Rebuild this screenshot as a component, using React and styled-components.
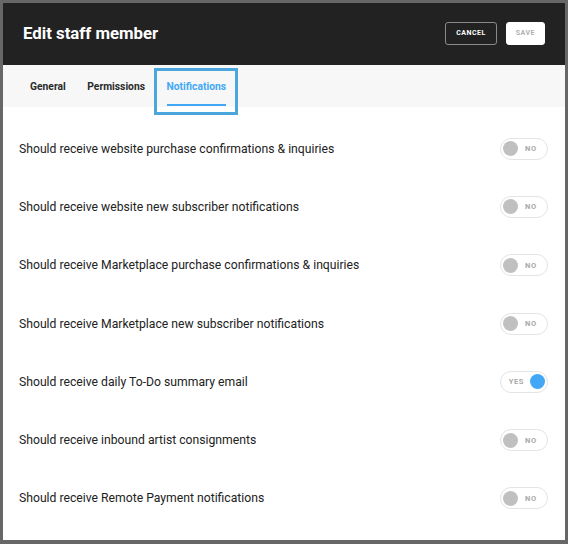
import React from 'react';
import styled, { createGlobalStyle } from 'styled-components';

const GlobalStyle = createGlobalStyle`
  html, body {
    margin: 0;
    padding: 0;
    background: #676767;
    font-family: Roboto, "Liberation Sans", sans-serif;
  }
`;

const settings = [
  { label: 'Should receive website purchase confirmations & inquiries', on: false },
  { label: 'Should receive website new subscriber notifications', on: false },
  { label: 'Should receive Marketplace purchase confirmations & inquiries', on: false },
  { label: 'Should receive Marketplace new subscriber notifications', on: false },
  { label: 'Should receive daily To-Do summary email', on: true },
  { label: 'Should receive inbound artist consignments', on: false },
  { label: 'Should receive Remote Payment notifications', on: false },
];

const Toggle = ({ on }) => (
  <Switch $on={on}>
    <Knob $on={on} />
    <SwitchLabel>{on ? 'YES' : 'NO'}</SwitchLabel>
  </Switch>
);

const App = () => {
  return (
    <>
      <GlobalStyle />
      <Page>
        <Modal>
          <Header>
            <Title>Edit staff member</Title>
            <Actions>
              <Button>Cancel</Button>
              <Button $primary>Save</Button>
            </Actions>
          </Header>
          <Tabs>
            <Tab>General</Tab>
            <Tab>Permissions</Tab>
            <Tab $active>Notifications</Tab>
          </Tabs>
          <List>
            {settings.map((s) => (
              <Row key={s.label}>
                <RowLabel>{s.label}</RowLabel>
                <Toggle on={s.on} />
              </Row>
            ))}
          </List>
        </Modal>
      </Page>
    </>
  );
};

const Page = styled.div`
  width: 568px;
  height: 544px;
  padding: 3px 3px 4px 3px;
  box-sizing: border-box;
`;

const Modal = styled.div`
  width: 562px;
  height: 537px;
  background: #fff;
  display: flex;
  flex-direction: column;
  overflow: hidden;
`;

const Header = styled.div`
  height: 62px;
  flex-shrink: 0;
  background: #222222;
  display: flex;
  align-items: center;
  justify-content: space-between;
  padding: 0 20px 2px 20px;
  box-sizing: border-box;
`;

const Title = styled.h1`
  margin: 0;
  color: #fff;
  font-size: 16.8px;
  font-weight: 700;
`;

const Actions = styled.div`
  display: flex;
  gap: 9px;
`;

const Button = styled.button`
  height: 23px;
  padding: 0 ${(p) => (p.$primary ? '9px' : '10px')};
  border-radius: 3px;
  border: 1px solid ${(p) => (p.$primary ? '#fff' : '#8a8a8a')};
  background: ${(p) => (p.$primary ? '#fff' : 'transparent')};
  color: ${(p) => (p.$primary ? '#b0b0b0' : '#fff')};
  font-family: Roboto, "Liberation Sans", sans-serif;
  font-size: 7px;
  font-weight: 700;
  letter-spacing: 0.5px;
  text-transform: uppercase;
`;

const Tabs = styled.div`
  height: 42px;
  flex-shrink: 0;
  background: #f7f7f7;
  display: flex;
  align-items: stretch;
  padding-left: 27px;
  gap: 21.5px;
`;

const Tab = styled.div`
  position: relative;
  display: flex;
  align-items: center;
  font-size: 10.3px;
  font-weight: 700;
  color: ${(p) => (p.$active ? '#42a8f5' : '#2a2a2a')};

  ${(p) =>
    p.$active &&
    `
    &::before {
      content: '';
      position: absolute;
      left: 0;
      right: 0;
      bottom: 1px;
      height: 2px;
      background: #42a8f5;
    }
    &::after {
      content: '';
      position: absolute;
      left: -13px;
      right: -12px;
      top: 3px;
      bottom: -8px;
      border: 3px solid #4aa6dc;
    }
  `}
`;

const List = styled.div`
  display: flex;
  flex-direction: column;
  padding-top: 20px;
`;

const Row = styled.div`
  height: 58.3px;
  display: flex;
  align-items: center;
  justify-content: space-between;
  padding: 0 17px 15px 16px;
  box-sizing: border-box;
`;

const RowLabel = styled.span`
  font-size: 12.2px;
  color: #222;
`;

const Switch = styled.div`
  width: 48px;
  height: 22px;
  box-sizing: border-box;
  border: 1px solid #e4e4e4;
  border-radius: 11px;
  background: #fff;
  display: flex;
  align-items: center;
  flex-direction: ${(p) => (p.$on ? 'row-reverse' : 'row')};
  justify-content: flex-start;
  gap: ${(p) => (p.$on ? '6px' : '7px')};
  padding: 0 2px;
`;

const Knob = styled.div`
  width: 15px;
  height: 15px;
  border-radius: 50%;
  background: ${(p) => (p.$on ? '#42a8f5' : '#c0c0c0')};
`;

const SwitchLabel = styled.span`
  font-size: 7.5px;
  font-weight: 700;
  color: #a8a8a8;
  letter-spacing: 0.6px;
`;

export default App;
